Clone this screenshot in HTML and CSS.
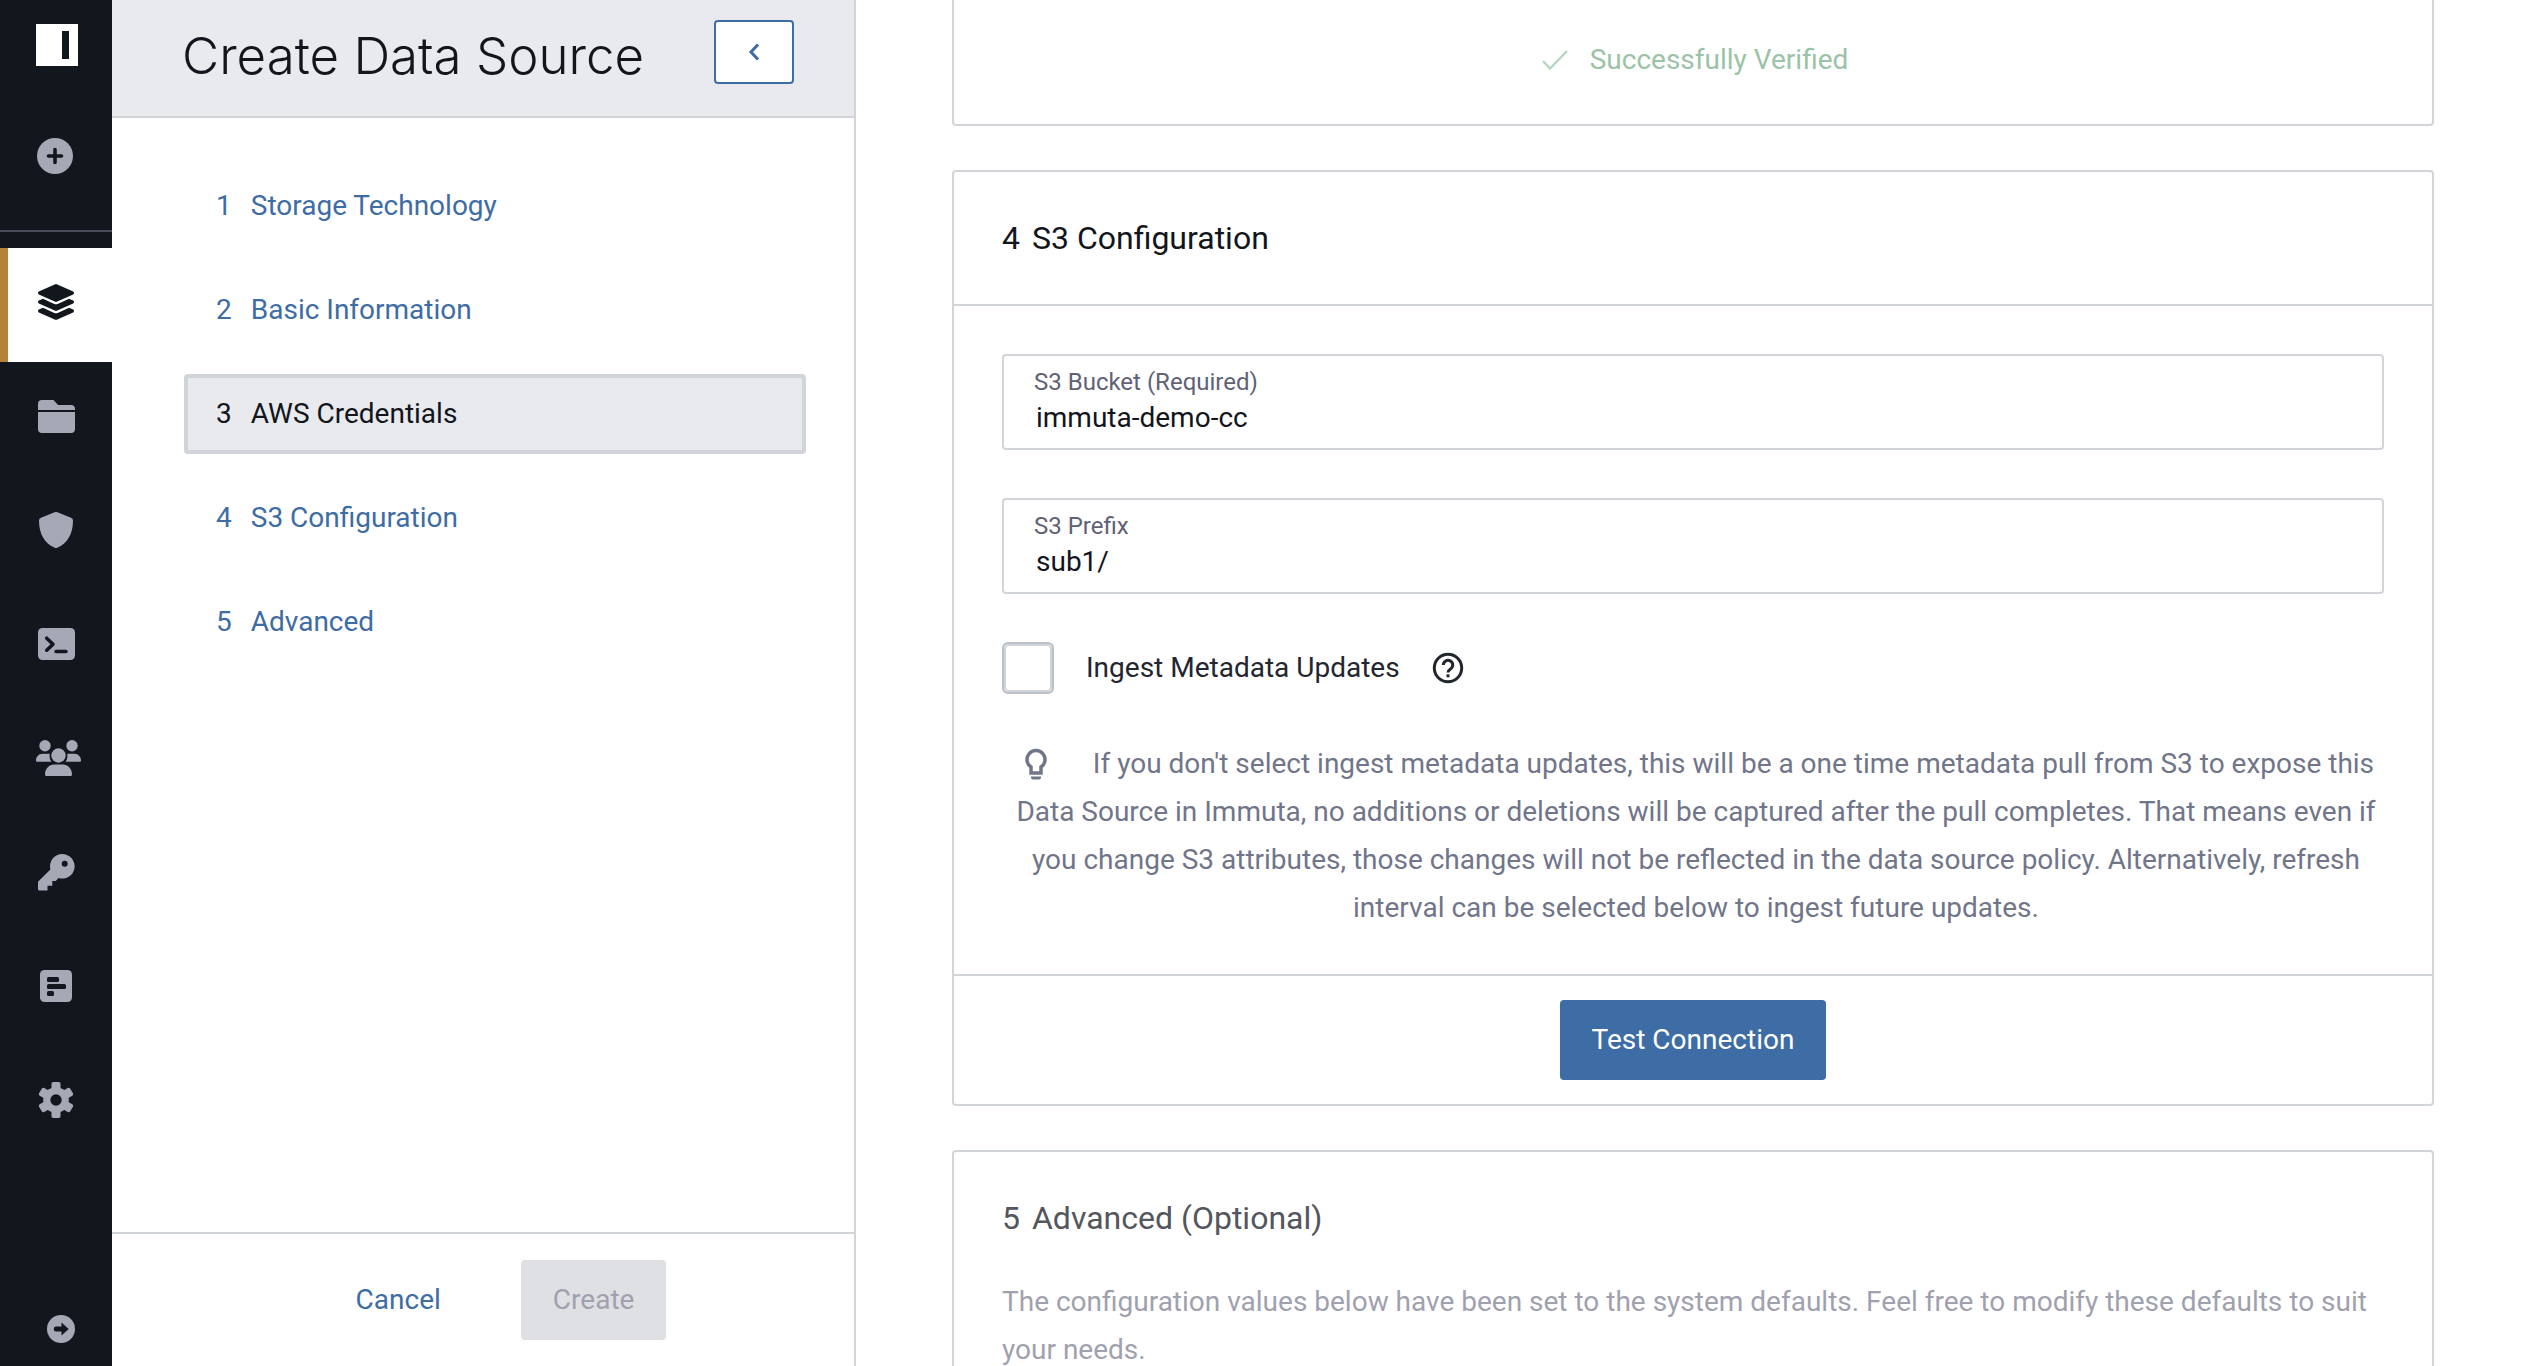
FILE: index.html
```html
<!DOCTYPE html>
<html lang="en">
<head>
<meta charset="utf-8">
<title>Create Data Source</title>
<link rel="stylesheet" href="styles.css">
</head>
<body>
<div class="app">
  <nav class="rail" aria-label="Main">
    <a class="rail-logo" href="#" aria-label="Home">
      <svg width="42" height="42" viewBox="0 0 42 42"><path fill="#fff" d="M0 0h42v42H0z"/><path fill="#12161d" d="M26 7h7v28h-7z"/></svg>
    </a>
    <a class="rail-add" href="#" aria-label="New">
      <svg width="36" height="36" viewBox="0 0 36 36"><circle cx="18" cy="18" r="18" fill="currentColor"/><path d="M18 11.500v13M11.500 18h13" stroke="#12161d" stroke-width="3.600" stroke-linecap="round"/></svg>
    </a>
    <ul class="rail-list">
      <li><a class="rail-item active" href="#" aria-label="Data sources">
        <svg width="36" height="36" viewBox="0 0 512 512" fill="currentColor"><path d="M12.410 148.020l232.940 105.670c6.800 3.090 14.490 3.090 21.290 0l232.940-105.670c16.550-7.510 16.550-32.520 0-40.030L266.650 2.310a25.607 25.607 0 0 0-21.290 0L12.410 107.980c-16.550 7.510-16.550 32.530 0 40.040zm487.180 88.280l-58.090-26.330-161.640 73.270c-7.560 3.430-15.590 5.170-23.860 5.170s-16.290-1.740-23.860-5.170L70.510 209.970l-58.100 26.330c-16.550 7.500-16.550 32.500 0 40l232.940 105.590c6.800 3.080 14.490 3.080 21.290 0L499.590 276.300c16.550-7.500 16.550-32.500 0-40zm0 127.800l-57.870-26.230-161.860 73.370c-7.560 3.430-15.590 5.170-23.860 5.170s-16.290-1.740-23.860-5.170L70.290 337.870 12.410 364.100c-16.550 7.500-16.550 32.500 0 40l232.940 105.590c6.800 3.080 14.490 3.080 21.290 0L499.590 404.100c16.550-7.500 16.550-32.500 0-40z"/></svg></a></li>
      <li><a class="rail-item" href="#" aria-label="Projects">
        <svg width="37" height="33" viewBox="0 0 37 33" fill="currentColor"><path d="M4 0h11.500l4.500 5h13a4 4 0 0 1 4 4v1H0V4a4 4 0 0 1 4-4zM0 12h37v17a4 4 0 0 1-4 4H4a4 4 0 0 1-4-4z"/></svg></a></li>
      <li><a class="rail-item" href="#" aria-label="Policies">
        <svg width="34" height="36" viewBox="0 0 34 36" fill="currentColor"><path d="M15.600.300a3.500 3.500 0 0 1 2.800 0L32 5.800A3 3 0 0 1 34 8.700C34 22 28 32 18.300 35.700a3.500 3.500 0 0 1-2.600 0C6 32 0 22 0 8.700A3 3 0 0 1 2 5.800z"/></svg></a></li>
      <li><a class="rail-item" href="#" aria-label="Query editor">
        <svg width="37" height="32" viewBox="0 0 37 32"><rect width="37" height="32" rx="4.500" fill="currentColor"/><path d="M8.700 10.200l6.300 6-6.300 6M18 23.500h10" fill="none" stroke="#12161d" stroke-width="3.500" stroke-linecap="round" stroke-linejoin="round"/></svg></a></li>
      <li><a class="rail-item wide" href="#" aria-label="People">
        <svg width="45" height="36" viewBox="0 0 45 36" fill="currentColor"><circle cx="9" cy="5.700" r="5.700"/><circle cx="36" cy="5.700" r="5.700"/><circle cx="22.500" cy="15.500" r="7.200"/><path d="M0 20.500C0 16.500 3 13.700 6.500 13.700h5.500c.700 0 1.300.100 1.800.300a10 10 0 0 0 1.500 7.700H1.200A1.200 1.200 0 0 1 0 20.500zM45 20.500c0-4-3-6.800-6.500-6.800H33c-.700 0-1.300.100-1.800.300a10 10 0 0 1-1.500 7.700h14.100a1.200 1.200 0 0 0 1.200-1.200zM9 34.500C9 28.500 13.500 24.600 18 24.600h9c4.500 0 9 3.900 9 9.900a1.500 1.500 0 0 1-1.500 1.500h-24A1.500 1.500 0 0 1 9 34.500z"/></svg></a></li>
      <li><a class="rail-item" href="#" aria-label="Keys">
        <svg width="37" height="37" viewBox="0 0 37 37"><path fill="currentColor" d="M24.300 0a12.300 12.300 0 1 1-3.800 24L17.800 27h-3.500v4.800H9.500v4.800H1.500A1.500 1.500 0 0 1 0 35.100v-7.300L12.400 15.500A12.300 12.300 0 0 1 24.300 0z"/><circle cx="26.700" cy="9.700" r="3" fill="#12161d"/></svg></a></li>
      <li><a class="rail-item" href="#" aria-label="Audit">
        <svg width="32" height="32" viewBox="0 0 32 32"><rect width="32" height="32" rx="4.500" fill="currentColor"/><g fill="#12161d"><rect x="7" y="7" width="12" height="5" rx="1.500"/><rect x="7" y="14" width="19" height="5" rx="1.500"/><rect x="7" y="21" width="7" height="5" rx="1.500"/></g></svg></a></li>
      <li><a class="rail-item" href="#" aria-label="Settings">
        <svg width="36" height="36" viewBox="0 0 36 36"><g fill="currentColor"><circle cx="18" cy="18" r="12.800"/><g id="tooth"><rect x="13.500" y="0" width="9" height="36" rx="1.800"/></g><use href="#tooth" transform="rotate(60 18 18)"/><use href="#tooth" transform="rotate(120 18 18)"/></g><circle cx="18" cy="18" r="5.700" fill="#12161d"/></svg></a></li>
    </ul>
    <a class="rail-expand" href="#" aria-label="Expand menu">
      <svg width="28" height="28" viewBox="0 0 28 28"><circle cx="14" cy="14" r="14" fill="currentColor"/><path d="M9 11.500h5.500V7.400l7.200 6.600-7.200 6.600v-4.100H9a2.200 2.200 0 0 1-2.200-2.200v-.600A2.200 2.200 0 0 1 9 11.500z" fill="#12161d"/></svg>
    </a>
  </nav>

  <aside class="panel">
    <header class="panel-head">
      <h1>Create Data Source</h1>
      <button class="collapse" type="button" aria-label="Collapse">
        <svg width="12" height="18" viewBox="0 0 12 18"><path d="M10 1.500L3 9l7 7.500" fill="none" stroke="currentColor" stroke-width="3"/></svg>
      </button>
    </header>
    <nav class="steps" aria-label="Steps">
      <a class="step" href="#"><span>1</span><span>Storage Technology</span></a>
      <a class="step" href="#"><span>2</span><span>Basic Information</span></a>
      <a class="step current" href="#" aria-current="step"><span>3</span><span>AWS Credentials</span></a>
      <a class="step" href="#"><span>4</span><span>S3 Configuration</span></a>
      <a class="step" href="#"><span>5</span><span>Advanced</span></a>
    </nav>
    <footer class="panel-foot">
      <button class="btn link" type="button">Cancel</button>
      <button class="btn" type="button" disabled>Create</button>
    </footer>
  </aside>

  <main class="content">
    <section class="card verified">
      <svg width="26" height="20" viewBox="0 0 26 20"><path d="M1 11l7 7.500L25 1" fill="none" stroke="currentColor" stroke-width="2.400"/></svg>
      <span>Successfully Verified</span>
    </section>

    <section class="card">
      <h2 class="card-head"><span>4</span><span>S3 Configuration</span></h2>
      <div class="card-body">
        <div class="field">
          <label for="bucket">S3 Bucket (Required)</label>
          <input id="bucket" type="text" value="immuta-demo-cc">
        </div>
        <div class="field">
          <label for="prefix">S3 Prefix</label>
          <input id="prefix" type="text" value="sub1/">
        </div>
        <div class="check-row">
          <input id="ingest" type="checkbox">
          <label for="ingest">Ingest Metadata Updates</label>
          <svg class="help" width="32" height="32" viewBox="0 0 32 32" fill="none" stroke="currentColor" stroke-width="3"><circle cx="16" cy="16" r="13.700"/><path d="M11.300 13a4.700 4.700 0 1 1 7.200 4c-1.600 1.100-2.500 1.900-2.500 3.500"/><path d="M16 22.300v3"/></svg>
        </div>
        <p class="hint"><svg width="36" height="32" viewBox="0 0 36 32"><path d="M13 19a9 9 0 1 1 10 0v6H13z" fill="none" stroke="currentColor" stroke-width="3.500"/><path d="M13 28.500h10v1a2 2 0 0 1-2 2h-6a2 2 0 0 1-2-2z" fill="currentColor"/></svg> If you don't select ingest metadata updates, this will be a one time metadata pull from S3 to expose this Data Source in Immuta, no additions or deletions will be captured after the pull completes. That means even if you change S3 attributes, those changes will not be reflected in the data source policy. Alternatively, refresh interval can be selected below to ingest future updates.</p>
      </div>
      <div class="card-foot">
        <button class="btn primary" type="button">Test Connection</button>
      </div>
    </section>

    <section class="card muted">
      <h2 class="card-head"><span>5</span><span>Advanced (Optional)</span></h2>
      <p>The configuration values below have been set to the system defaults. Feel free to modify these defaults to suit your needs.</p>
    </section>
  </main>
</div>
</body>
</html>
```

FILE: styles.css
```css
* {
  box-sizing: border-box;
}

body {
  margin: 0;
  font-family: Roboto, "Liberation Sans", sans-serif;
  font-size: 28px;
  line-height: 48px;
  color: #12151c;
  background: #fff;
}

a {
  text-decoration: none;
}

svg {
  display: block;
  flex: none;
}

button,
input {
  font: inherit;
  color: inherit;
}

.app {
  display: flex;
  height: 100vh;
  overflow: hidden;
}

/* Icon rail */
.rail {
  flex: none;
  display: flex;
  flex-direction: column;
  width: 112px;
  color: #a5a8b5;
  background: #12161d;
}

.rail a {
  color: inherit;
}

.rail-logo {
  padding: 24px 36px 0;
}

.rail-add {
  padding: 72px 37px 56px;
  border-bottom: 2px solid #4a4d58;
}

.rail-list {
  margin: 16px 0 0;
  padding: 0;
  list-style: none;
}

.rail-item {
  display: flex;
  align-items: center;
  justify-content: center;
  height: 114px;
  padding-bottom: 6px;
}

.rail-item.wide {
  padding-left: 4px;
}

.rail .rail-item.active {
  padding-right: 8px;
  border-left: 8px solid #b28338;
  color: #12161d;
  background: #fff;
}

.rail-expand {
  margin-top: auto;
  padding: 0 37px 23px 47px;
}

/* Steps panel */
.panel {
  flex: none;
  display: flex;
  flex-direction: column;
  width: 744px;
  border-right: 2px solid #d1d5da;
}

.panel-head {
  display: flex;
  justify-content: space-between;
  align-items: flex-start;
  height: 118px;
  padding: 20px 60px 0 70px;
  border-bottom: 2px solid #d1d3d9;
  background: #e9eaee;
}

h1 {
  margin: 0;
  font-family: Inter, "Liberation Sans", sans-serif;
  font-size: 51px;
  font-weight: 300;
  line-height: 72px;
  white-space: nowrap;
}

.collapse {
  display: flex;
  align-items: center;
  justify-content: center;
  width: 80px;
  height: 64px;
  padding: 0;
  border: 2px solid #3e6ca4;
  border-radius: 4px;
  color: #3e6ca4;
  background: #fff;
}

.steps {
  flex: 1;
  display: flex;
  flex-direction: column;
  gap: 24px;
  padding: 48px 48px 48px 72px;
}

.step {
  display: flex;
  align-items: center;
  gap: 19px;
  height: 80px;
  padding: 0 28px;
  border: 4px solid transparent;
  border-radius: 4px;
  color: #3e6ca4;
}

.step.current {
  border-color: #d1d5da;
  color: #12151c;
  background: #e9eaee;
}

.panel-foot {
  display: flex;
  justify-content: center;
  gap: 48px;
  padding: 26px 0 26px 24px;
  border-top: 2px solid #d1d5da;
}

.btn {
  height: 80px;
  padding: 0 32px;
  border: 0;
  border-radius: 4px;
}

.btn:disabled {
  color: #9fa1af;
  background: #dfe0e4;
}

.btn.link {
  color: #3e6ca4;
  background: none;
}

.btn.primary {
  color: #fff;
  background: #3e6ca4;
}

/* Form cards */
.content {
  flex: 1;
  display: flex;
  flex-direction: column;
  gap: 44px;
  min-width: 0;
  padding: 0 91px 0 96px;
}

.card {
  flex: none;
  border: 2px solid #d1d5da;
  border-radius: 4px;
}

.verified {
  display: flex;
  align-items: center;
  justify-content: center;
  gap: 22px;
  height: 126px;
  padding: 0 0 4px 4px;
  border-top: 0;
  border-radius: 0 0 4px 4px;
  color: #9bc3a7;
}

.verified svg {
  color: #b5d6c0;
}

.card-head {
  display: flex;
  gap: 12px;
  margin: 0;
  padding: 42px 48px;
  border-bottom: 2px solid #d1d5da;
  font-size: 32px;
  font-weight: 400;
}

.card-body {
  display: flex;
  flex-direction: column;
  gap: 48px;
  padding: 48px;
}

.field {
  display: flex;
  flex-direction: column;
  height: 96px;
  padding: 10px 30px;
  border: 2px solid #d1d5da;
  border-radius: 4px;
}

.field label {
  font-size: 24px;
  line-height: 32px;
  color: #5f6275;
}

.field input {
  height: 40px;
  padding: 0 2px;
  border: 0;
  outline: 0;
  background: none;
}

.check-row {
  display: flex;
  align-items: center;
  color: #23262f;
}

.check-row input {
  appearance: none;
  width: 52px;
  height: 52px;
  margin: 0 32px 0 0;
  border: 2px solid #bbc1c8;
  border-radius: 6px;
  background: #fff;
  box-shadow: inset 0 0 0 2px #d1d5da;
}

.help {
  margin-left: 32px;
}

.hint {
  margin: -2px 0 -6px;
  padding-left: 6px;
  text-align: center;
  color: #71758a;
}

.hint svg {
  display: inline-block;
  margin-right: 32px;
  vertical-align: -7px;
}

.card-foot {
  display: flex;
  justify-content: center;
  padding: 24px;
  border-top: 2px solid #d1d5da;
}

.muted {
  color: #9fa1af;
}

.muted .card-head {
  padding-bottom: 12px;
  border: 0;
  color: #54565e;
}

.muted p {
  margin: 0;
  padding: 24px 48px;
}
```
